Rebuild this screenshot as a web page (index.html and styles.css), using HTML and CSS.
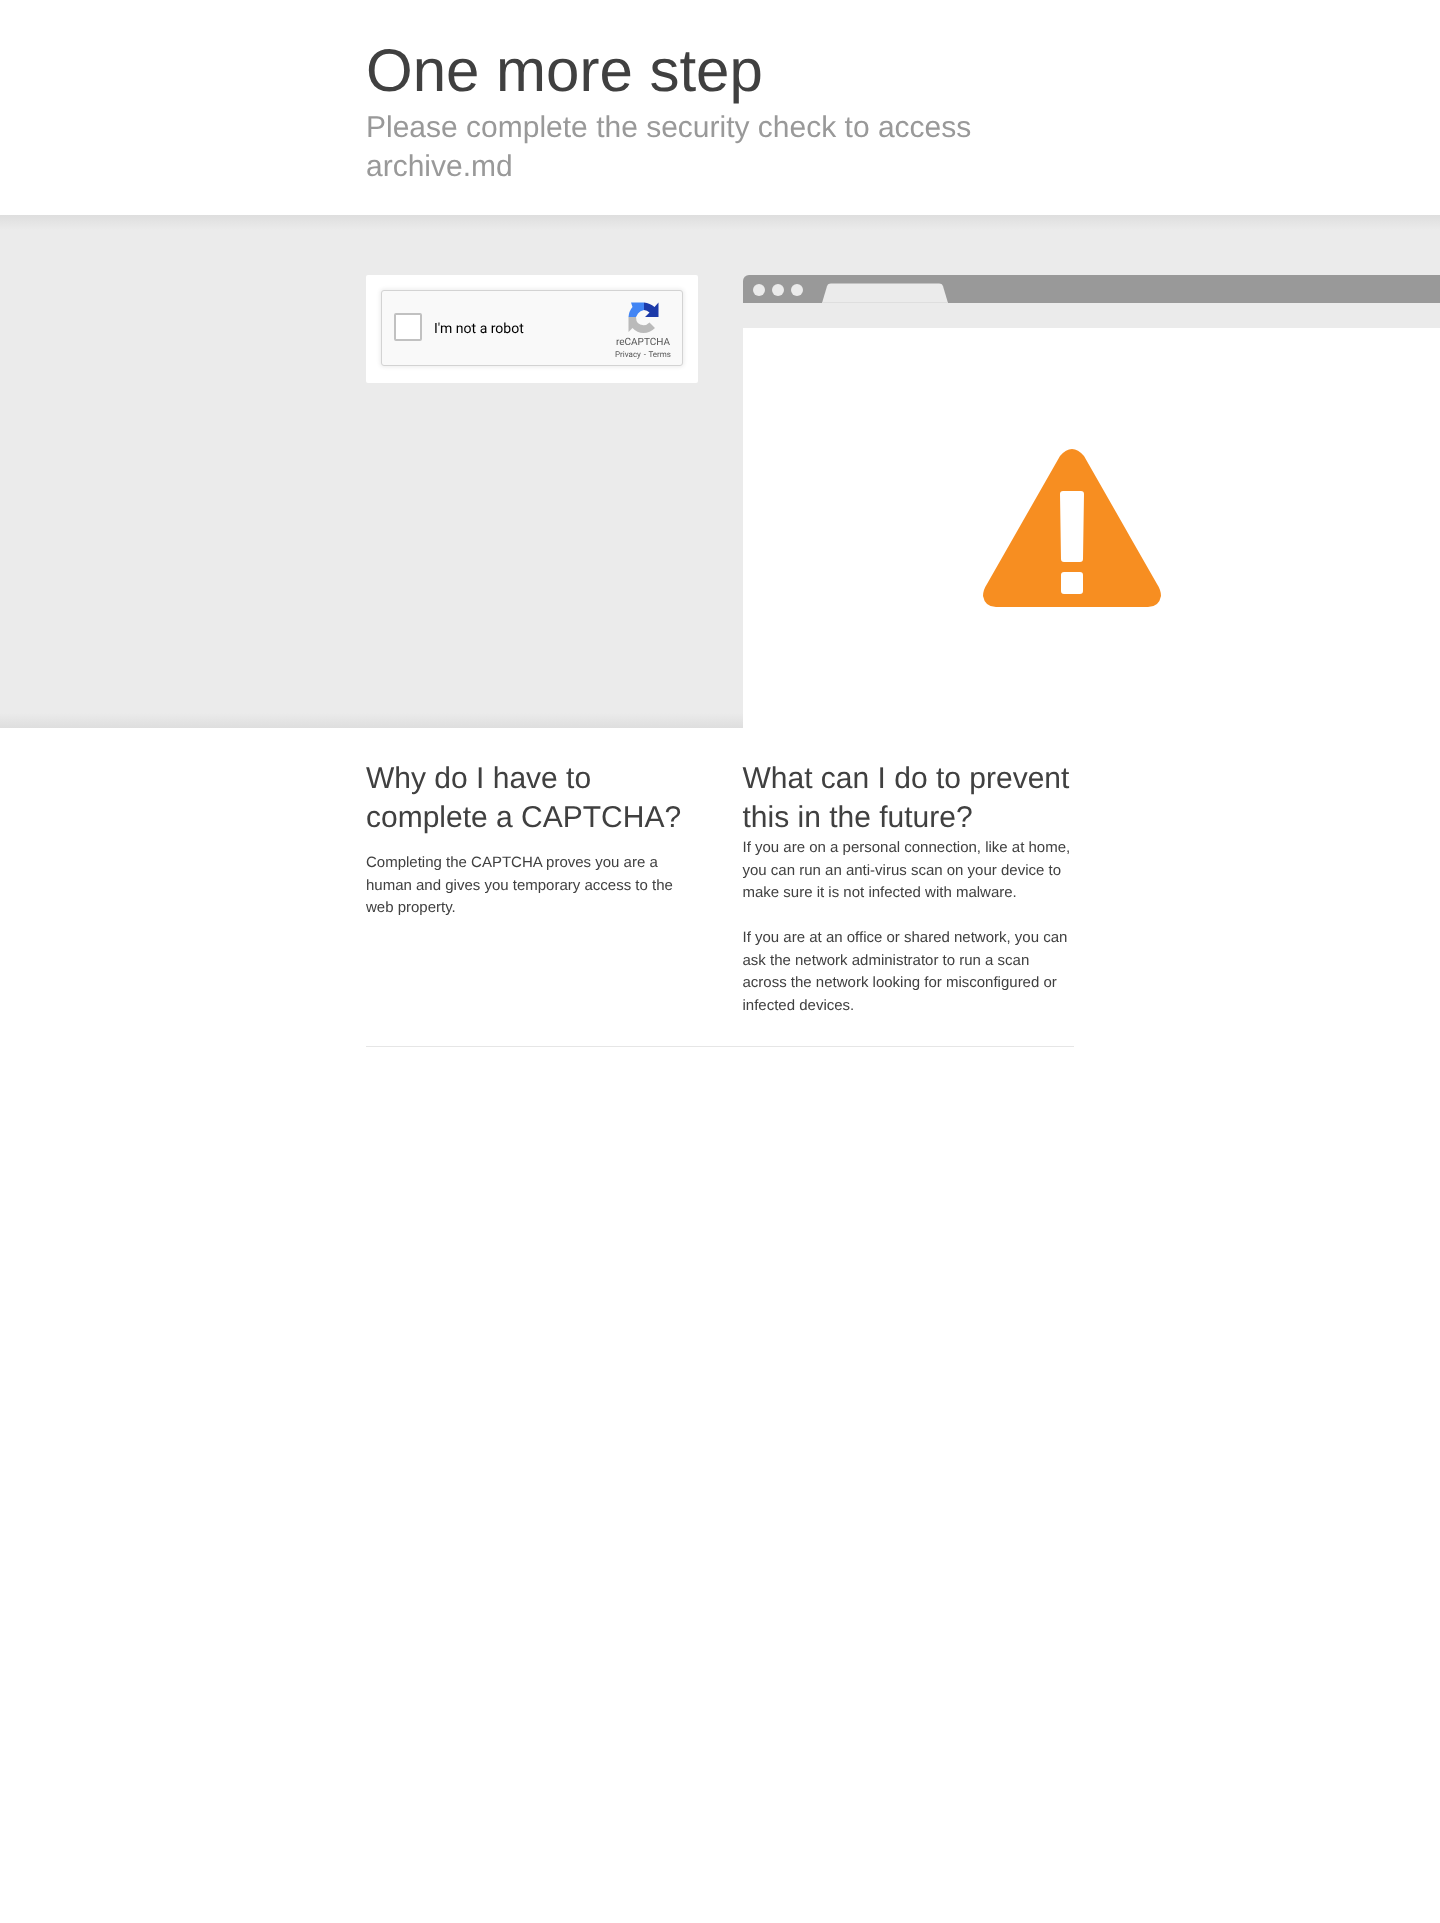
FILE: index.html
```html
<!DOCTYPE html>
<html lang="en">
<head>
<meta charset="utf-8">
<title>Attention Required!</title>
<link rel="stylesheet" href="styles.css">
</head>
<body>
<header class="header">
  <div class="container">
    <h1 class="title">One more step</h1>
    <h2 class="subtitle">Please complete the security check to access archive.md</h2>
  </div>
</header>
<section class="band">
  <div class="container band-grid">
    <div class="captcha-col">
      <div class="captcha-card">
        <div class="recaptcha">
          <span class="checkbox"></span>
          <span class="robot">I'm not a robot</span>
          <div class="brand">
            <svg class="logo" width="31" height="31" viewBox="0 0 31 31">
              <path fill="#bababa" d="M0.500 15H8Q8 23 15.500 23.200Q19 23.200 21.500 20.500L27 26Q22 31 15.500 31Q9 31 4.500 26L0.500 30Z"/>
              <path fill="#4285f4" d="M3 0.500H16V8Q12 8.500 10 11.500L8 15H0.500Q1 9 4.500 5Z"/>
              <path fill="#1c3aa9" d="M16 0.500Q22 1 26.500 5L30.500 0.500V15H17L21.500 10.500Q19 8 16 8Z"/>
            </svg>
            <span class="brand-name">reCAPTCHA</span>
            <span class="brand-links">Privacy - Terms</span>
          </div>
        </div>
      </div>
    </div>
    <div class="browser">
      <div class="browser-bar">
        <span class="dot"></span><span class="dot"></span><span class="dot"></span>
        <svg class="tab" width="126" height="20" viewBox="0 0 126 20"><path fill="#ebebeb" d="M0 20 5 3.200C5.600 1.200 7 .5 9 .5h108c2 0 3.400.700 4 2.700L126 20z"/><rect y="19" x="1" width="124" height="1" fill="#dedede"/></svg>
      </div>
      <div class="browser-gap"></div>
      <div class="browser-page">
        <svg class="warning" width="178" height="158" viewBox="0 0 178 158">
          <path fill="#f78e21" fill-rule="evenodd" d="M77 7Q83 0 89 0Q95 0 101 7L174 135Q178 141 178 147Q176 158 165 158H13Q2 158 0 147Q0 141 4 135ZM80 42Q77 42 77 45L78 110Q78 113 81 113H97Q100 113 100 110L101 45Q101 42 98 42ZM81 123Q78 123 78 126V142Q78 145 81 145H97Q100 145 100 142V126Q100 123 97 123Z"/>
        </svg>
      </div>
    </div>
  </div>
</section>
<section class="container info">
  <div class="info-col">
    <h2 class="info-title">Why do I have to complete a CAPTCHA?</h2>
    <p class="info-text spaced">Completing the CAPTCHA proves you are a human and gives you temporary access to the web property.</p>
  </div>
  <div class="info-col">
    <h2 class="info-title">What can I do to prevent this in the future?</h2>
    <p class="info-text">If you are on a personal connection, like at home, you can run an anti-virus scan on your device to make sure it is not infected with malware.</p>
    <p class="info-text gap">If you are at an office or shared network, you can ask the network administrator to run a scan across the network looking for misconfigured or infected devices.</p>
  </div>
</section>
<div class="container"><hr class="rule"></div>
</body>
</html>
```
FILE: styles.css
```css
* { box-sizing: border-box; }
html, body { margin: 0; padding: 0; }
body {
  min-height: 1923px;
  background: #fff;
  color: #404040;
  font-family: "Liberation Sans", Arial, sans-serif;
  overflow-x: hidden;
  text-rendering: geometricPrecision;
}
.container { width: 708px; margin-left: 366px; will-change: opacity; }
.header { height: 215px; padding-top: 35px; }
.title { margin: 0 0 1px; font-size: 60px; line-height: 72px; font-weight: 400; color: #404040; }
.subtitle { margin: 0; font-size: 30px; line-height: 39px; font-weight: 400; color: #999; }
.band {
  height: 513px;
  padding-top: 60px;
  background:
    linear-gradient(#dedede, #ebebeb) top / 100% 15px no-repeat,
    linear-gradient(#ebebeb, #dedede) bottom / 100% 15px no-repeat,
    #ebebeb;
  overflow: hidden;
}
.band-grid { display: flex; gap: 45px; }
.captcha-col { width: 332px; flex: none; }
.captcha-card { background: #fff; width: 332px; height: 108px; padding: 15px; border-radius: 2px; }
.recaptcha {
  position: relative;
  display: flex;
  align-items: center;
  width: 302px;
  height: 76px;
  background: #f9f9f9;
  border: 1px solid #d3d3d3;
  border-radius: 3px;
  box-shadow: 0 0 4px 1px rgba(0,0,0,.08);
  padding-left: 12px;
  font-family: Roboto, "Liberation Sans", sans-serif;
}
.checkbox {
  width: 28px;
  height: 28px;
  flex: none;
  margin-bottom: 2px;
  background: #fff;
  border: 2px solid #c1c1c1;
  border-radius: 2px;
}
.robot { margin-left: 12px; padding-top: 2px; font-size: 14px; color: #000; }
.brand {
  position: absolute;
  top: 11px;
  right: 10px;
  width: 58px;
  display: flex;
  flex-direction: column;
  align-items: center;
  color: #555;
}
.logo { display: block; }
.brand-name { margin-top: 2.500px; font-size: 10px; line-height: 13px; white-space: nowrap; }
.brand-links { margin-top: 1.500px; font-size: 8px; line-height: 10px; word-spacing: .8px; white-space: nowrap; color: #555; }
.browser { width: 900px; flex: none; }
.browser-bar {
  position: relative;
  display: flex;
  align-items: center;
  gap: 7px;
  height: 28px;
  padding: 1px 0 0 9.500px;
  background: #999;
  border-top-left-radius: 6px;
}
.dot { width: 12px; height: 12px; border-radius: 50%; background: #ebebeb; }
.tab { position: absolute; left: 79px; bottom: 0; }
.browser-gap { height: 25px; }
.browser-page {
  height: 400px;
  background: #fff;
  padding: 121px 0 0 240px;
}
.warning { display: block; }
.info { display: flex; gap: 44.500px; padding-top: 31px; }
.info-col { width: 332px; flex: none; }
.info-title { margin: 0; font-size: 30px; line-height: 39px; font-weight: 400; color: #404040; }
.info-text { margin: 0; font-size: 15px; line-height: 22.500px; color: #404040; }
.spaced { margin-top: 15px; }
.gap { margin-top: 22.500px; }
.rule { margin: 29px 0 0; border: 0; border-top: 1px solid #e6e6e6; }
```
